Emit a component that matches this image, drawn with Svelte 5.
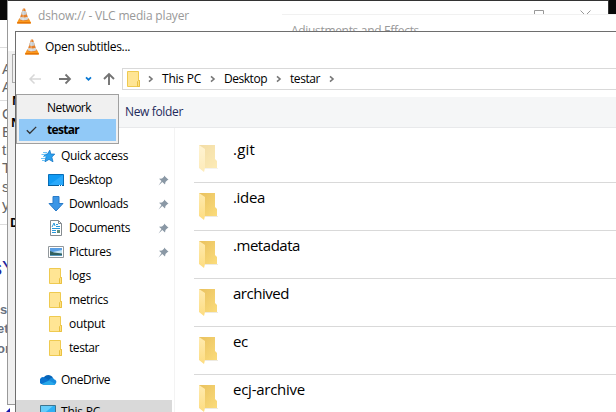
<script>
  const places = [
    { name: 'Quick access', icon: 'star', level: 0, w: 67 },
    { name: 'Desktop', icon: 'desktop', pin: true, w: 43 },
    { name: 'Downloads', icon: 'down', pin: true, w: 59 },
    { name: 'Documents', icon: 'doc', pin: true, w: 61 },
    { name: 'Pictures', icon: 'pic', pin: true, w: 42 },
    { name: 'logs', icon: 'folder', w: 22 },
    { name: 'metrics', icon: 'folder', w: 39 },
    { name: 'output', icon: 'folder', w: 36 },
    { name: 'testar', icon: 'folder', w: 30 },
    { name: 'OneDrive', icon: 'cloud', level: 0, gap: true, w: 49 },
    { name: 'This PC', icon: 'pc', level: 0, gap: true, selected: true, w: 39 }
  ];
  const files = [
    { name: '.git', w: 22, faded: true },
    { name: '.idea', w: 32 },
    { name: '.metadata', w: 67 },
    { name: 'archived', w: 56 },
    { name: 'ec', w: 15 },
    { name: 'ecj-archive', w: 72 }
  ];
  const crumbs = [
    { name: 'This PC', w: 39 },
    { name: 'Desktop', w: 43 },
    { name: 'testar', w: 30 }
  ];
  const page = [
    ['A', 69], ['A', 87], ['C', 114], ['E', 132], ['th', 150], ['T', 168], ['s', 187], ['y', 205]
  ];

  // Spreads the letters so that a label takes the given width.
  function fit(node, width) {
    const apply = () => {
      node.style.letterSpacing = '0px';
      const natural = node.getBoundingClientRect().width;
      node.style.letterSpacing = (width - natural) / node.textContent.length + 'px';
    };
    apply();
    document.fonts.ready.then(apply);
  }
</script>

{#snippet cone()}
  <svg class="cone" width="16" height="16" viewBox="0 0 16 16">
    <path d="M3.2 10.5h9.6l2 3.7v1.3H1.2v-1.3z" fill="#fb9a1c" />
    <path d="M1.2 14.2h13.6v1.3H1.2z" fill="#e06c00" />
    <path d="M7 .5h2L12.8 12q-4.8 2.2-9.6 0z" fill="#e5802a" />
    <path d="M6.2 3h3.6l1.1 3.3q-2.9 1.3-5.8 0z" fill="#c9cdd0" />
    <path d="M4.3 8.8q3.7 1.3 7.4 0l.8 2.5q-4.5 1.9-9 0z" fill="#d6d9db" />
    <path d="M7 .5h1v12H6z" fill="#fff" opacity=".25" />
  </svg>
{/snippet}

{#snippet sheet()}
  <svg width="14" height="16" viewBox="0 0 14 16">
    <path d="M.5.5h11v9h1v6H.5z" fill="#ffe594" stroke="#efca50" />
    <path d="M10.5 15.5v-5l1-1h1v6z" fill="#ffe080" stroke="#e9c142" />
  </svg>
{/snippet}

{#snippet icon(kind)}
  {#if kind === 'folder'}
    {@render sheet()}
  {:else if kind === 'star'}
    <svg width="16" height="16" viewBox="0 0 16 16">
      <path d="M9.8 2.2 10.8 6l4 .1-3 3 1.2 4.7-4-2.4-4 2.4.9-4.5L3.6 6.5l3.8-.4z" fill="#2aa0ee" stroke="#1877c5" stroke-width=".8" />
      <path d="M3 4.5h4M1.5 6.5h4M3 8.5h3M1 10.5h4M2 12.5h3" stroke="#6cc4f7" />
    </svg>
  {:else if kind === 'desktop'}
    <svg width="16" height="13" viewBox="0 0 16 13">
      <path d="M.5.5h15v11H.5z" fill="#119bf4" stroke="#086eb8" />
      <path d="M1 11 15 1v10z" fill="#2aa9fb" />
      <path d="M0 11.5h16" stroke="#075d9c" />
      <path d="M11 11.5h3" stroke="#fff" stroke-dasharray="1 1" />
    </svg>
  {:else if kind === 'down'}
    <svg width="16" height="16" viewBox="0 0 16 16">
      <path d="M5 .5h6v7h4L8 15 1 7.5h4z" fill="#3c96e6" stroke="#2a7bc8" />
    </svg>
  {:else if kind === 'doc'}
    <svg width="14" height="16" viewBox="0 0 14 16">
      <path d="M1.5.5h8l3 3v12h-11z" fill="#fff" stroke="#858b90" />
      <path d="M9.5.5v3h3" fill="none" stroke="#858b90" />
      <path d="m3 7 2-4 1 3M7 4.5h2M7 6.5h4M3 8.5h8M3 10.5h4M3 12.5h4" fill="none" stroke="#2998dc" />
      <path d="M8 10h3v3H8z" fill="#638c78" />
    </svg>
  {:else if kind === 'pic'}
    <svg width="16" height="12" viewBox="0 0 16 12">
      <path d="M.5.5h15v11H.5z" fill="#fff" stroke="#92989c" />
      <path d="M2 2h12v8H2z" fill="#5a9fe4" />
      <path d="M5 6 14 4v4H4z" fill="#c5e5f5" />
      <path d="m2 5 4 1.5 8 1V9H2z" fill="#31605e" />
      <path d="M2 9h12v1H2z" fill="#5798bd" />
    </svg>
  {:else if kind === 'cloud'}
    <svg width="17" height="12" viewBox="0 0 17 12">
      <path d="M3 5C4.5.5 10.5-.5 13 4l-6 6z" fill="#0764b8" />
      <path d="M1.3 10A3.6 3.6 0 0 1 5 3.8l7 4L5 11z" fill="#0a73cf" />
      <path d="M9 6c1-3 5-2.5 5.3-.5 3 .7 2.5 4 0 5.5H9z" fill="#168bdd" />
      <path d="M2 9.8 9 6.4l6.4 3.5Q14.6 11 13.4 11H4.2Q2.7 11 2 9.8z" fill="#28a8ea" />
    </svg>
  {:else}
    <svg width="16" height="14" viewBox="0 0 16 14">
      <path d="M.5.5h15v11H.5z" fill="#2eb0f5" stroke="#3c7590" />
      <path d="M1 11 13 1H1z" fill="#65cdfb" />
    </svg>
  {/if}
{/snippet}

<div class="screen">
  <div class="page">
    {#each page as [text, y]}
      <span style:top="{y - 10}px">{text}</span>
    {/each}
    <i class="rule" style:top="47px"></i>
    <i class="rule" style:top="100px"></i>
    <i class="rule" style:top="224px"></i>
    <b class="heading">sY</b>
    <b class="link" style:top="300px" style:left="0">s</b>
    <b class="link" style:top="319px" style:left="-3px">et</b>
    <b class="link" style:top="339px" style:left="-3px">ore</b>
    <i class="arrow"></i>
  </div>
  <div class="corner left"></div>
  <div class="corner right"></div>

  <div class="player">
    <header>{@render cone()}<span use:fit={151}>dshow:// - VLC media player</span></header>
    <div class="client">
      <div class="tab"></div>
    </div>
  </div>
  <svg class="controls" width="60" height="5" viewBox="0 0 60 5">
    <path d="M.5 6V.5h9V6M46.5.5l5 5 5-5" fill="none" stroke="#999" />
  </svg>
  <b class="cut" style:top="94px" style:left="12px">N</b>
  <b class="cut" style:top="116px" style:left="11px">N</b>
  <b class="cut" style:top="216px" style:left="10px">D</b>

  <div class="effects"><span use:fit={128}>Adjustments and Effects</span></div>

  <div class="dialog">
    <header>{@render cone()}<span use:fit={85}>Open subtitles...</span></header>
    <nav>
      <svg class="arrows" width="106" height="22" viewBox="0 0 106 22">
        <path d="M25 11H14M18.5 6.5 14 11l4.5 4.5" fill="none" stroke="#d7d7d7" stroke-width="1.5" />
        <path d="M43 11h11M49.5 6.5 54 11l-4.5 4.5" fill="none" stroke="#737373" stroke-width="1.8" />
        <path d="m70 9.3 2.5 2.4L75 9.3" fill="none" stroke="#0878d4" stroke-width="1.7" />
        <path d="M93 17V6M88 11l5-5 5 5" fill="none" stroke="#737373" stroke-width="1.9" />
      </svg>
      <div class="address">
        {@render sheet()}
        {#each crumbs as crumb}
          <svg class="chev" width="6" height="8" viewBox="0 0 6 8"><path d="m1 1.3 3 2.7-3 2.7" fill="none" stroke="#777" stroke-width="1.6" /></svg>
          <span class="crumb" style:width="{crumb.w}px"><span use:fit={crumb.w}>{crumb.name}</span></span>
        {/each}
        <svg class="chev" width="6" height="8" viewBox="0 0 6 8"><path d="m1 1.3 3 2.7-3 2.7" fill="none" stroke="#777" stroke-width="1.6" /></svg>
      </div>
    </nav>
    <div class="toolbar"><span use:fit={58}>New folder</span></div>
    <div class="body">
      <aside>
        {#each places as place}
          <div class="place" class:top={place.level === 0} class:gap={place.gap} class:selected={place.selected}>
            <span class="icon">{@render icon(place.icon)}</span>
            <span class="name"><span use:fit={place.w}>{place.name}</span></span>
            {#if place.pin}
              <svg class="pin" width="11" height="11" viewBox="0 0 11 11">
                <path d="m6 .5 4.5 4.3-1.2.4L7.5 7 7 9.5 4.3 7 .5 10.5l3-4.4L1 3.7l3-.3L6 1.7z" fill="#8a98a5" />
              </svg>
            {/if}
          </div>
        {/each}
      </aside>
      <main>
        {#each files as file}
          <div class="file">
            <svg class:faded={file.faded} width="20" height="28" viewBox="0 0 20 28">
              <defs>
                <linearGradient id="back" x2="1" y2="1"><stop stop-color="#e9c15e" /><stop offset="1" stop-color="#fbdc7c" /></linearGradient>
                <linearGradient id="front" x2="0" y2="1"><stop stop-color="#ffebb0" /><stop offset="1" stop-color="#fddc80" /></linearGradient>
              </defs>
              <path d="M0 0h16v14l2 2v7H0z" fill="url(#back)" />
              <path d="M0 0l6 4v19l-1 4-5-4z" fill="url(#front)" />
              <path d="M6 23.5h13" stroke="#eeeae0" />
            </svg>
            <span use:fit={file.w}>{file.name}</span>
          </div>
        {/each}
      </main>
    </div>
  </div>

  <div class="menu">
    <div class="option"><span use:fit={44}>Network</span></div>
    <div class="option current">
      <svg width="11" height="9" viewBox="0 0 11 9"><path d="m.8 4.3 3 3L10.2.9" fill="none" stroke="#333" stroke-width="1.3" /></svg>
      <span use:fit={32}>testar</span>
    </div>
  </div>
</div>

<style>
  .screen {
    position: relative;
    width: 616px;
    height: 412px;
    overflow: hidden;
    background: #fff;
    color: #000;
    font: 12px/16px 'Open Sans', 'Noto Sans', sans-serif;
    white-space: nowrap;
  }
  svg { display: block; flex: none; }
  .page span, .page b, .page i, .cut { position: absolute; }
  .page span { left: 2px; color: #666; font: 15px/20px 'Liberation Sans', sans-serif; }
  .page .rule { left: 0; width: 7px; height: 1px; background: #ddd; }
  .page .heading { left: -8px; top: 256px; color: #23239b; font: 20px/24px 'Liberation Sans', sans-serif; }
  .page .link { color: #687180; font: bold 13px/20px 'Liberation Sans', sans-serif; }
  .page .arrow {
    left: 5px;
    top: 408px;
    border: 5px solid transparent;
    border-right-color: #1717a8;
    border-left: 0;
  }
  .corner { position: absolute; top: 0; background: #080808; }
  .left { left: 0; width: 7px; height: 20px; }
  .right { right: 0; width: 7px; height: 14px; }
  .player {
    position: absolute;
    left: 7px;
    top: 0;
    width: 600px;
    height: 403px;
    border: 1px solid #999;
    border-top-color: #333;
    border-right-color: #333;
    background: #fff;
  }
  header { display: flex; align-items: center; }
  .player header { height: 30px; padding-left: 8px; gap: 6px; color: #999; }
  .client { height: 353px; margin-top: 20px; background: #f0f0f0; }
  .tab { width: 20px; height: 29px; margin-left: 4px; border: 1px solid #aaa; border-right: 0; position: relative; top: 3px; box-sizing: border-box; }
  .cut { font: bold 12px/14px 'Open Sans', sans-serif; }
  .controls { position: absolute; left: 534px; top: 10px; }
  .effects {
    position: absolute;
    left: 282px;
    top: 14px;
    width: 334px;
    height: 17px;
    padding: 8px 0 0 9px;
    box-sizing: border-box;
    border-top: 1px solid #f1f1f1;
    background: #fff;
    color: #999;
  }
  .dialog {
    position: absolute;
    left: 15px;
    top: 31px;
    width: 620px;
    height: 400px;
    border: 1px solid #6e6e6e;
    background: #fff;
  }
  .dialog header { height: 30px; padding-left: 8px; gap: 5px; }
  nav { display: flex; height: 35px; padding-top: 6px; box-sizing: border-box; }
  .address {
    display: flex;
    align-items: center;
    flex: 1;
    height: 22px;
    box-sizing: border-box;
    border: 1px solid #d9d9d9;
    padding-left: 4px;
  }
  .chev { margin: 0 8px 0 9px; }
  .address > svg:first-child + .chev { margin-left: 7px; }
  .crumb { display: block; }
  .toolbar {
    height: 31px;
    box-sizing: border-box;
    border-bottom: 1px solid #e8e9eb;
    background: #f5f6f7;
    padding: 7px 0 0 109px;
    color: #1e2a5c;
  }
  .body { display: flex; }
  aside { width: 158px; padding-top: 16px; border-right: 1px solid #f3f3f3; }
  .place { display: flex; align-items: center; height: 24px; padding-left: 32px; }
  .place.top { padding-left: 24px; }
  .gap { margin-top: 8px; }
  .selected { margin-right: 2px; background: #d9d9d9; }
  .icon { display: flex; justify-content: center; width: 16px; margin-right: 5px; }
  .name { flex: 1; }
  .pin { margin-right: 5px; }
  main { flex: 1; padding: 7px 0 0 19px; }
  .file {
    display: flex;
    align-items: flex-start;
    height: 48px;
    box-sizing: border-box;
    padding: 10px 0 0 5px;
    gap: 14px;
    border-bottom: 1px solid #d9d9d9;
    font-size: 15px;
    line-height: 20px;
  }
  .file span { margin-top: -6px; }
  .faded { opacity: .55; }
  .menu {
    position: absolute;
    left: 16px;
    top: 94px;
    width: 103px;
    height: 50px;
    box-sizing: border-box;
    border: 1px solid #a0a0a0;
    padding: 2px;
    background: #f0f0f0;
  }
  .option { display: flex; align-items: center; height: 22px; padding-left: 28px; }
  .current { padding-left: 7px; background: #91c9f7; font-weight: 700; }
  .current svg { margin-right: 10px; }
</style>
